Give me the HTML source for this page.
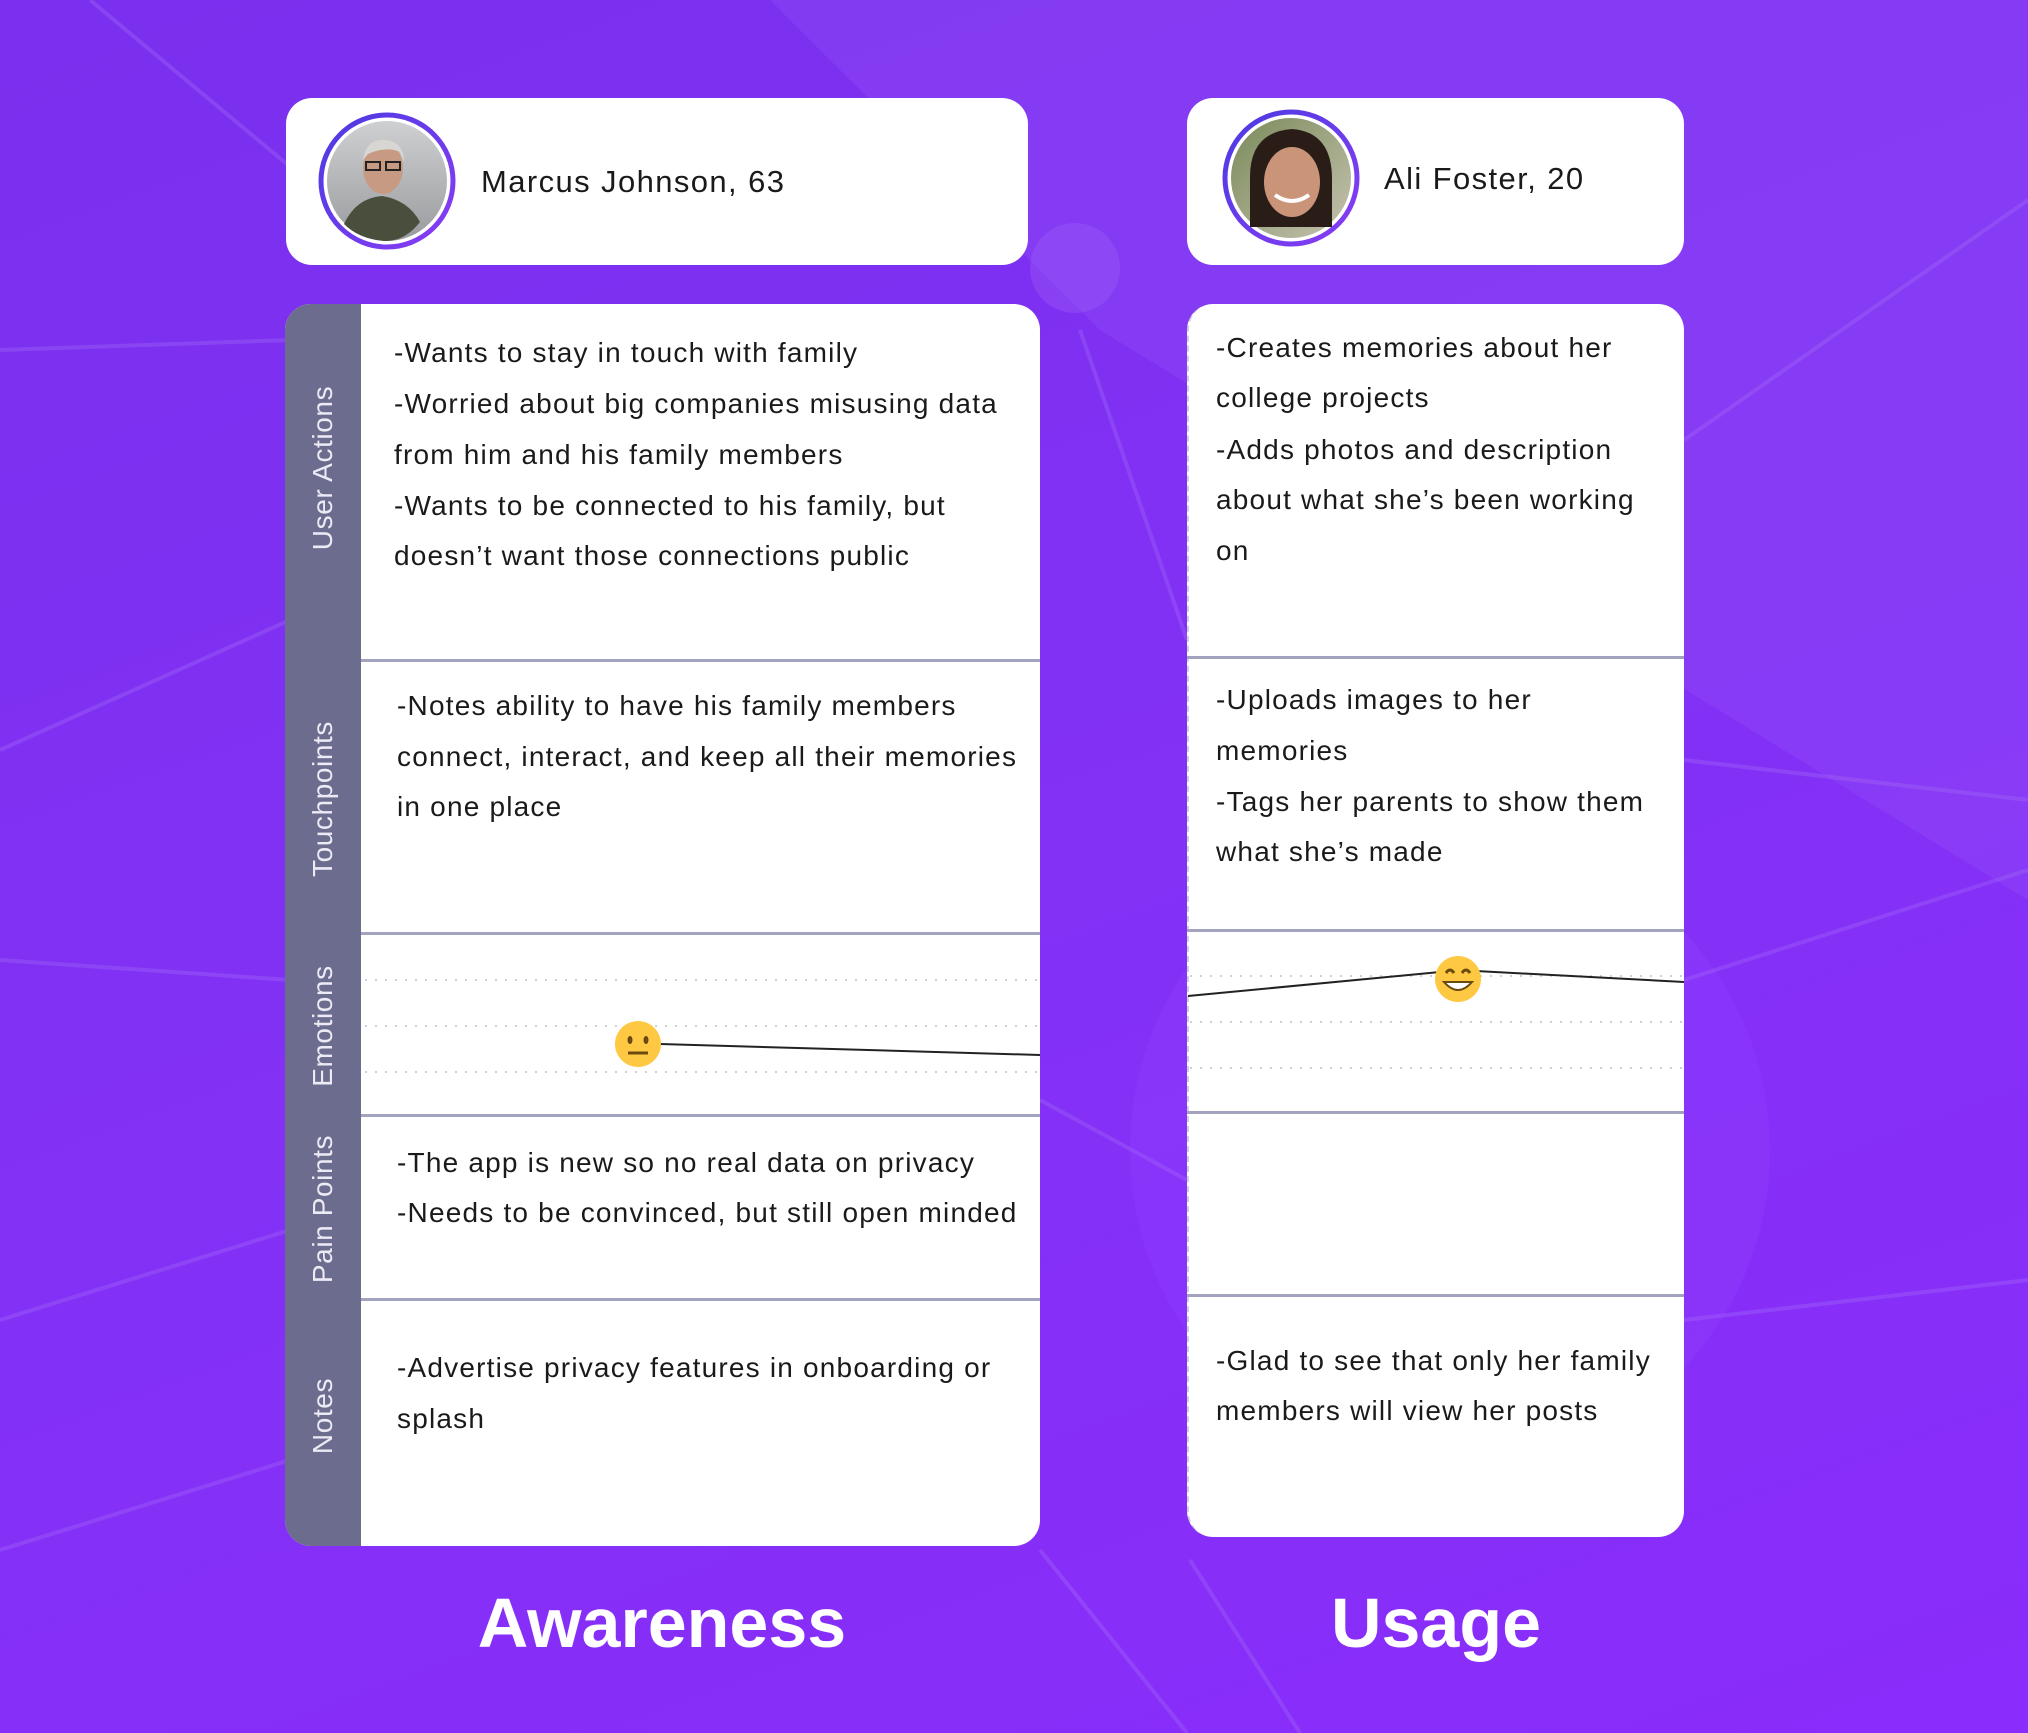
<!DOCTYPE html>
<html><head><meta charset="utf-8"><style>
*{margin:0;padding:0;box-sizing:border-box}
body{width:2028px;height:1733px;position:relative;overflow:hidden;font-family:"Liberation Sans",sans-serif;background:linear-gradient(160deg,#7a30ee 0%,#8231f5 50%,#8a2cfb 100%)}
.abs{position:absolute}
.card{position:absolute;background:#fff;border-radius:26px}
.t{position:absolute;font-size:28px;color:#1a1a1a;white-space:nowrap;line-height:1;letter-spacing:1.2px}
.side{position:absolute;left:285px;top:304px;width:76px;height:1242px;background:#6c6c8e;border-radius:26px 0 0 26px}
.lab{position:absolute;color:#eceaf5;font-size:28px;white-space:nowrap;transform:translate(-50%,-50%) rotate(-90deg);left:323px;letter-spacing:0.6px}
.div{position:absolute;height:3px;background:#a3a3c0}
.title{position:absolute;color:#fff;font-weight:bold;font-size:70px;transform:translate(-50%,-50%);top:1623px}
</style></head><body>
<svg class="abs" style="left:0;top:0" width="2028" height="1733">
<path d="M770 0 L2028 0 L2028 900 L1100 330 Z" fill="#9250f7" opacity="0.35"/>
<circle cx="1450" cy="1150" r="320" fill="#9340ff" opacity="0.35"/>
<g stroke="#a36cf5" stroke-width="4" opacity="0.35" fill="none">
<path d="M90 0 L330 200"/><path d="M0 350 L290 340"/><path d="M0 750 L290 620"/><path d="M0 960 L290 980"/>
<path d="M0 1320 L290 1230"/><path d="M0 1550 L290 1460"/><path d="M1684 760 L2028 800"/><path d="M1684 980 L2028 870"/>
<path d="M1684 1320 L2028 1280"/><path d="M1040 1100 L1187 1180"/><path d="M1040 1550 L1187 1733"/><path d="M1684 440 L2028 200"/>
<path d="M1080 330 L1187 640"/><path d="M1190 1560 L1300 1733"/></g>
<circle cx="1075" cy="268" r="45" fill="#9a5af5" opacity="0.4"/>
</svg>

<div class="card" style="left:286px;top:98px;width:742px;height:167px"></div>
<div class="card" style="left:1187px;top:98px;width:497px;height:167px"></div>
<svg class="abs" style="left:316px;top:110px" width="142" height="142">
<defs><linearGradient id="g1" x1="0" y1="0" x2="0" y2="1"><stop offset="0" stop-color="#cfd0d2"/><stop offset="1" stop-color="#9a9b9e"/></linearGradient>
<linearGradient id="rb" x1="0" y1="0" x2="1" y2="1"><stop offset="0" stop-color="#4b3be0"/><stop offset="1" stop-color="#8a3cf5"/></linearGradient></defs>
<circle cx="71" cy="71" r="66" fill="#fff" stroke="url(#rb)" stroke-width="5"/>
<circle cx="71" cy="71" r="60" fill="url(#g1)"/>
<ellipse cx="67" cy="58" rx="20" ry="26" fill="#c79b83"/>
<path d="M47 50 Q50 28 70 30 Q88 32 88 52 L84 42 Q70 36 52 44Z" fill="#d8d6d2"/>
<path d="M28 114 Q40 88 66 86 Q92 90 104 112 Q90 130 71 131 Q44 130 28 114Z" fill="#4a4f3d"/>
<rect x="50" y="52" width="14" height="8" fill="none" stroke="#222" stroke-width="2"/><rect x="70" y="52" width="14" height="8" fill="none" stroke="#222" stroke-width="2"/>
</svg>
<svg class="abs" style="left:1220px;top:107px" width="142" height="142">
<defs><linearGradient id="g2" x1="0" y1="0" x2="1" y2="1"><stop offset="0" stop-color="#7a8a5a"/><stop offset="1" stop-color="#c6c3b0"/></linearGradient></defs>
<circle cx="71" cy="71" r="66" fill="#fff" stroke="url(#rb)" stroke-width="5"/>
<circle cx="71" cy="71" r="60" fill="url(#g2)"/>
<path d="M30 70 Q30 25 72 22 Q112 25 112 72 L112 120 L30 120Z" fill="#2a1d18"/>
<ellipse cx="72" cy="75" rx="28" ry="35" fill="#c99478"/>
<path d="M55 88 Q72 100 89 88" stroke="#fff" stroke-width="4" fill="none"/>
</svg>
<div class="t" style="left:481px;top:166px;font-size:31px;letter-spacing:1.4px">Marcus Johnson, 63</div>
<div class="t" style="left:1384px;top:163px;font-size:31px;letter-spacing:1.4px">Ali Foster, 20</div>

<div class="card" style="left:285px;top:304px;width:755px;height:1242px"></div>
<div class="side"></div>
<div class="div" style="left:361px;top:659px;width:679px"></div>
<div class="div" style="left:361px;top:932px;width:679px"></div>
<div class="div" style="left:361px;top:1114px;width:679px"></div>
<div class="div" style="left:361px;top:1298px;width:679px"></div>
<div class="lab" style="top:468px">User Actions</div>
<div class="lab" style="top:799px">Touchpoints</div>
<div class="lab" style="top:1026px">Emotions</div>
<div class="lab" style="top:1209px">Pain Points</div>
<div class="lab" style="top:1416px">Notes</div>

<div class="t" style="left:394px;top:339px">-Wants to stay in touch with family</div>
<div class="t" style="left:394px;top:390px">-Worried about big companies misusing data</div>
<div class="t" style="left:394px;top:441px">from him and his family members</div>
<div class="t" style="left:394px;top:492px">-Wants to be connected to his family, but</div>
<div class="t" style="left:394px;top:542px">doesn’t want those connections public</div>
<div class="t" style="left:397px;top:692px">-Notes ability to have his family members</div>
<div class="t" style="left:397px;top:743px">connect, interact, and keep all their memories</div>
<div class="t" style="left:397px;top:793px">in one place</div>
<div class="t" style="left:397px;top:1149px">-The app is new so no real data on privacy</div>
<div class="t" style="left:397px;top:1199px">-Needs to be convinced, but still open minded</div>
<div class="t" style="left:397px;top:1354px">-Advertise privacy features in onboarding or</div>
<div class="t" style="left:397px;top:1405px">splash</div>

<div class="card" style="left:1187px;top:304px;width:497px;height:1233px;border-left:2px dashed #d0d0e0"></div>
<div class="div" style="left:1187px;top:656px;width:497px"></div>
<div class="div" style="left:1187px;top:929px;width:497px"></div>
<div class="div" style="left:1187px;top:1111px;width:497px"></div>
<div class="div" style="left:1187px;top:1294px;width:497px"></div>
<div class="t" style="left:1216px;top:334px">-Creates memories about her</div>
<div class="t" style="left:1216px;top:384px">college projects</div>
<div class="t" style="left:1216px;top:436px">-Adds photos and description</div>
<div class="t" style="left:1216px;top:486px">about what she’s been working</div>
<div class="t" style="left:1216px;top:537px">on</div>
<div class="t" style="left:1216px;top:686px">-Uploads images to her</div>
<div class="t" style="left:1216px;top:737px">memories</div>
<div class="t" style="left:1216px;top:788px">-Tags her parents to show them</div>
<div class="t" style="left:1216px;top:838px">what she’s made</div>
<div class="t" style="left:1216px;top:1347px">-Glad to see that only her family</div>
<div class="t" style="left:1216px;top:1397px">members will view her posts</div>

<svg class="abs" style="left:0;top:0" width="2028" height="1733">
<g stroke="#cfcfd8" stroke-width="2" stroke-dasharray="2 8">
<line x1="365" y1="980" x2="1038" y2="980"/><line x1="365" y1="1026" x2="1038" y2="1026"/><line x1="365" y1="1072" x2="1038" y2="1072"/>
<line x1="1190" y1="976" x2="1682" y2="976"/><line x1="1190" y1="1022" x2="1682" y2="1022"/><line x1="1190" y1="1068" x2="1682" y2="1068"/>
</g>
<g stroke="#222" stroke-width="2"><line x1="660" y1="1044" x2="1040" y2="1055"/>
<line x1="1188" y1="996" x2="1440" y2="972"/><line x1="1476" y1="971" x2="1684" y2="982"/></g>
<ellipse cx="638" cy="1044" rx="23" ry="23" fill="#ffc843"/>
<ellipse cx="630" cy="1040" rx="2.5" ry="4" fill="#6b4a10"/><ellipse cx="646" cy="1040" rx="2.5" ry="4" fill="#6b4a10"/>
<line x1="628" y1="1053" x2="648" y2="1053" stroke="#6b4a10" stroke-width="3"/>
<circle cx="1458" cy="979" r="23" fill="#ffc843"/>
<path d="M1446 973 q4 -6 8 0 M1462 973 q4 -6 8 0" stroke="#6b4a10" stroke-width="3" fill="none"/>
<path d="M1444 982 Q1458 998 1472 982 Z" fill="#fff" stroke="#6b4a10" stroke-width="2"/>
</svg>

<div class="title" style="left:662px">Awareness</div>
<div class="title" style="left:1436px">Usage</div>
</body></html>
